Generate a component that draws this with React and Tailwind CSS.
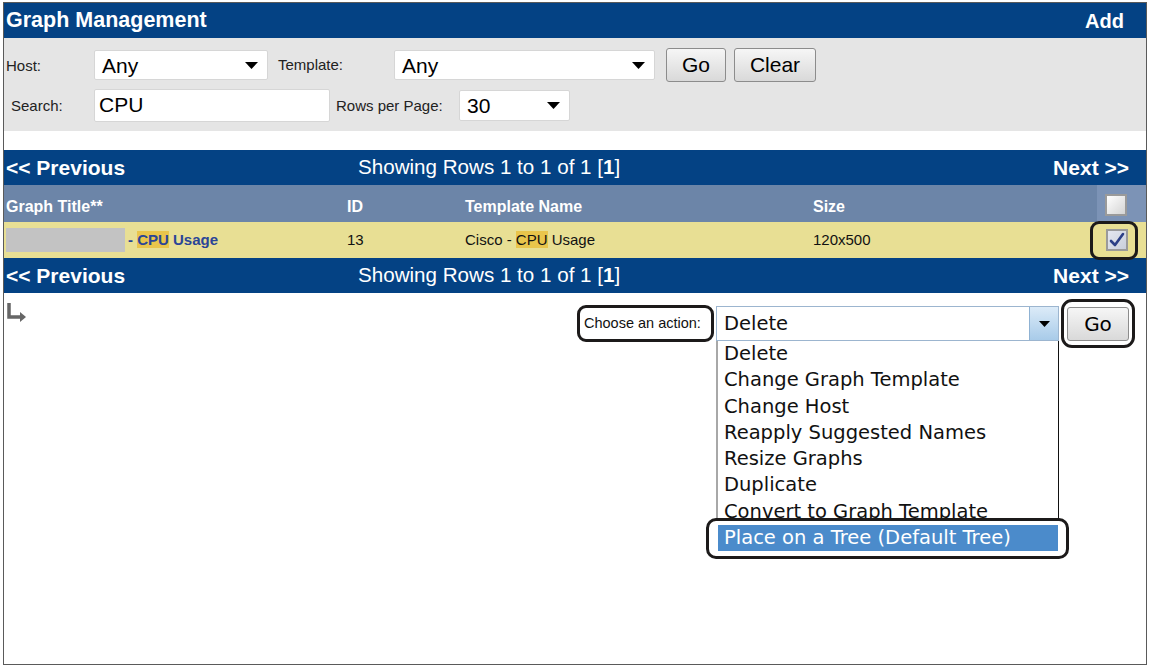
import React from 'react';

const arial = { fontFamily: '"Liberation Sans", Arial, sans-serif' };
const tahoma = { fontFamily: '"DejaVu Sans", Tahoma, sans-serif' };

const Caret = () => (
  <svg width="13" height="7" viewBox="0 0 13 7">
    <path d="M0 0 L13 0 L6.5 7 Z" fill="#000" />
  </svg>
);

const Select = ({ value, className }) => (
  <div className={`flex items-center justify-between bg-white rounded-[2px] border border-[#d6d6d6] pl-[7px] pr-[9px] ${className}`}>
    <span className="text-[21px] text-black leading-none">{value}</span>
    <Caret />
  </div>
);

const Btn = ({ children, className }) => (
  <div className={`flex items-center justify-center rounded-[3px] border border-[#8c8c8c] bg-gradient-to-b from-[#f6f6f6] to-[#d9d9d9] text-[21px] text-black ${className}`}>
    {children}
  </div>
);

const NavBar = () => (
  <div className="grid grid-cols-[354px_1fr_auto] items-center h-[35px] bg-[#044284] text-white">
    <span className="pl-[2px] text-[21px] font-bold">&lt;&lt; Previous</span>
    <span className="text-[20.6px]">Showing Rows 1 to 1 of 1 [<b>1</b>]</span>
    <span className="pr-[17px] text-[21px] font-bold">Next &gt;&gt;</span>
  </div>
);

const Checkbox = ({ checked }) => (
  <div className={`w-[22px] h-[22px] border-[2px] border-[#9a9a9a] flex items-center justify-center ${checked ? 'bg-gradient-to-br from-[#e4e7ef] to-[#c9cfdc]' : 'bg-gradient-to-br from-[#ffffff] to-[#d4d4d4]'}`}>
    {checked && (
      <svg width="16" height="16" viewBox="0 0 16 16">
        <path d="M2 9 L6 13 L14 2" stroke="#2b3f86" strokeWidth="2.6" fill="none" strokeLinecap="round" strokeLinejoin="round" />
      </svg>
    )}
  </div>
);

const actions = [
  'Delete',
  'Change Graph Template',
  'Change Host',
  'Reapply Suggested Names',
  'Resize Graphs',
  'Duplicate',
  'Convert to Graph Template',
];

export default function App() {
  return (
    <div className="w-[1151px] h-[668px] bg-white pt-[2px] pl-[3px]" style={arial}>
      <div className="w-[1144px] h-[663px] border border-[#5a5a5a] flex flex-col">
        {/* title bar */}
        <div className="h-[35px] bg-[#044284] flex items-center justify-between text-white font-bold">
          <span className="pl-[2px] text-[21.5px]">Graph Management</span>
          <span className="pr-[22px] text-[20px]">Add</span>
        </div>

        {/* filters */}
        <div className="h-[93px] bg-[#e5e5e5] pt-[10px] flex flex-col gap-[6px]">
          <div className="flex items-center h-[34px]">
            <span className="w-[90px] pl-[2px] pt-[3px] text-[15px] text-[#222]">Host:</span>
            <Select value="Any" className="w-[174px] h-[30px]" />
            <span className="ml-[10px] w-[116px] text-[15px] text-[#222]">Template:</span>
            <Select value="Any" className="w-[261px] h-[30px]" />
            <Btn className="ml-[11px] w-[60px] h-[34px]">Go</Btn>
            <Btn className="ml-[8px] w-[82px] h-[34px]">Clear</Btn>
          </div>
          <div className="flex items-center h-[34px]">
            <span className="w-[90px] pl-[7px] pt-[2px] text-[15px] text-[#222]">Search:</span>
            <div className="w-[236px] h-[33px] bg-white border border-[#d6d6d6] rounded-[2px] pl-[4px] flex items-center text-[21px] text-black">CPU</div>
            <span className="ml-[6px] w-[123px] pt-[2px] text-[15px] text-[#222]">Rows per Page:</span>
            <Select value="30" className="w-[111px] h-[31px]" />
          </div>
        </div>

        <div className="h-[19px]" />

        <NavBar />

        {/* table header */}
        <div className="grid grid-cols-[341px_118px_348px_1fr_49px] h-[37px] bg-[#6c85a8] text-white font-bold text-[16px] items-center">
          <span className="pl-[2px] pt-[6px]">Graph Title**</span>
          <span className="pl-[2px] pt-[6px]">ID</span>
          <span className="pl-[2px] pt-[6px]">Template Name</span>
          <span className="pl-[2px] pt-[6px]">Size</span>
          <div className="h-full bg-[#7c93b6] flex items-center pl-[8px] pt-[2px]">
            <Checkbox />
          </div>
        </div>

        {/* data row */}
        <div className="grid grid-cols-[341px_118px_348px_1fr_49px] h-[36px] bg-[#e8df94] text-[15px] text-[#111] items-center">
          <span className="pl-[2px] flex items-center">
            <span className="inline-block w-[119px] h-[24px] bg-[#c3c3c3]" />
            <span className="ml-[3px] font-bold text-[#2a4597]">
              - <span className="bg-[#e9c54b]">CPU</span> Usage
            </span>
          </span>
          <span className="pl-[2px]">13</span>
          <span className="pl-[2px]">
            Cisco - <span className="bg-[#e9c54b]">CPU</span> Usage
          </span>
          <span className="pl-[2px]">120x500</span>
          <div className="relative h-full flex items-center pl-[9px]">
            <div className="absolute left-[-7px] top-[-1px] w-[48px] h-[39px] border-[3px] border-[#1c1a1a] rounded-[9px]" />
            <Checkbox checked />
          </div>
        </div>

        <NavBar />

        {/* actions */}
        <div className="relative flex justify-between pt-[6px] pr-[11px]">
          <svg width="22" height="20" viewBox="0 0 22 20" className="mt-[3px] ml-[2px]">
            <path d="M3 1 V15 H16" stroke="#666" strokeWidth="3.5" fill="none" />
            <path d="M14 10 L20 15 L14 20 Z" fill="#666" />
          </svg>
          <div className="flex items-center h-[49px] gap-[2px]">
            <div className="w-[137px] h-[37px] border-[3px] border-[#1c1a1a] rounded-[9px] flex items-center pl-[4px] text-[14.5px] text-[#111] bg-white">
              Choose an action:
            </div>
            <div className="relative w-[343px] h-[35px]" style={tahoma}>
              <div className="h-full flex items-center justify-between border border-[#9cb5cf] bg-white">
                <span className="pl-[7px] text-[19.5px] text-[#111]">Delete</span>
                <div className="w-[29px] h-full border-l border-[#8fb2d3] bg-gradient-to-b from-[#dcebf8] to-[#a8cbe9] flex items-center justify-center">
                  <svg width="11" height="6" viewBox="0 0 11 6">
                    <path d="M0 0 L11 0 L5.5 6 Z" fill="#000" />
                  </svg>
                </div>
              </div>
              <div className="absolute left-0 top-full w-full border-l-[2px] border-l-[#a8a8a8] border-r border-r-[#111] border-b border-b-[#111] bg-white">
                {actions.map((a) => (
                  <div key={a} className="h-[26.3px] leading-[26.3px] pl-[6px] text-[19.5px] text-[#111] whitespace-nowrap">
                    {a}
                  </div>
                ))}
                <div className="relative h-[26px]">
                  <div className="absolute left-[-12px] right-[-11px] top-[-7px] bottom-[-8px] border-[3px] border-[#1c1a1a] rounded-[10px] bg-white" />
                  <div className="relative h-full bg-[#4b8bcb] text-white text-[19.5px] leading-[26px] pl-[6px] whitespace-nowrap">
                    Place on a Tree (Default Tree)
                  </div>
                </div>
              </div>
            </div>
            <div className="w-[74px] h-[49px] border-[3px] border-[#1c1a1a] rounded-[11px] flex items-center justify-center bg-white">
              <Btn className="w-[62px] h-[34px]">
                <span style={tahoma} className="text-[20px]">Go</span>
              </Btn>
            </div>
          </div>
        </div>
      </div>
    </div>
  );
}
